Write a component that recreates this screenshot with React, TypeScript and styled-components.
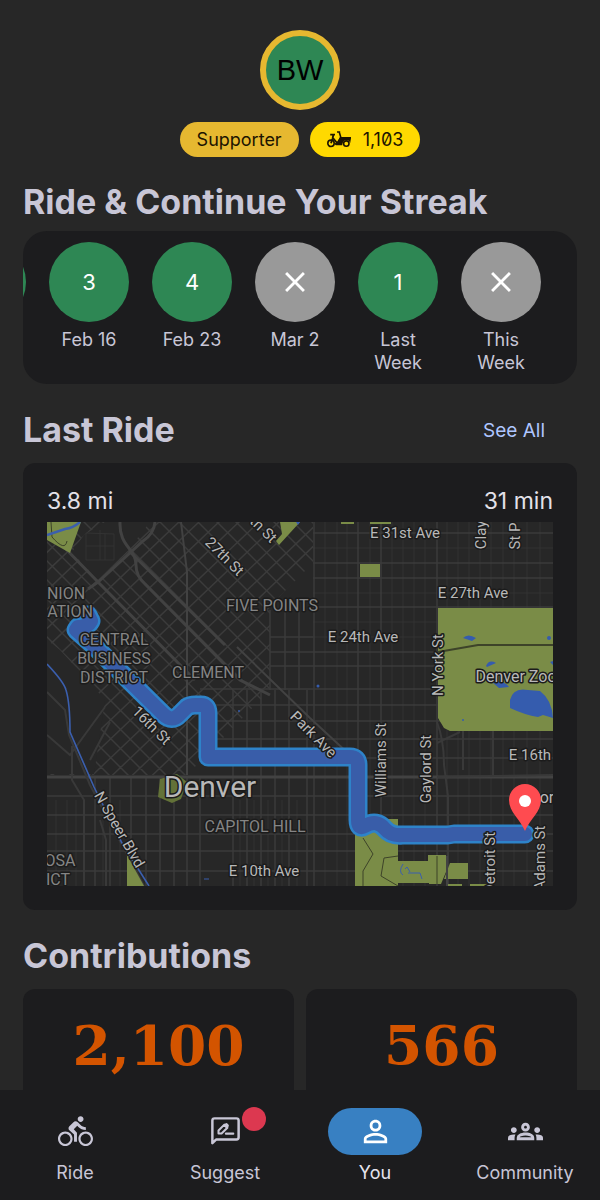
import React from "react";
import styled, { createGlobalStyle } from "styled-components";
import {
  MdClose,
  MdDirectionsBike,
  MdOutlineGroups,
  MdPersonOutline,
} from "react-icons/md";

const GlobalStyle = createGlobalStyle`
  * { box-sizing: border-box; }
  body {
    margin: 0;
    background: #272727;
    color: #c8c6d6;
    font-family: Inter, "Liberation Sans", sans-serif;
  }
  h2, p, ul, ol { margin: 0; padding: 0; }
  li { list-style: none; }
  button { font: inherit; border: 0; cursor: pointer; }
`;

const Shell = styled.div`
  display: flex;
  flex-direction: column;
  height: 100vh;
`;

const Main = styled.main`
  flex: 1;
  min-height: 0;
  overflow-y: auto;
  scrollbar-width: none;
  padding: 30px 23px 24px;
`;

const Profile = styled.header`
  display: flex;
  flex-direction: column;
  align-items: center;
  gap: 12px;
`;

const Avatar = styled.div`
  display: grid;
  place-items: center;
  width: 80px;
  height: 80px;
  border: 6px solid #e6b830;
  border-radius: 50%;
  background: #2e8754;
  color: #000;
  font: 29px "Liberation Sans", sans-serif;
`;

const Chips = styled.div`
  display: flex;
  gap: 11px;
`;

const Chip = styled.span<{ $color: string }>`
  display: flex;
  align-items: center;
  gap: 12px;
  height: 35px;
  padding: 0 17px;
  border-radius: 18px;
  background: ${(p) => p.$color};
  color: #1c1400;
  font-size: 18px;
  font-feature-settings: "zero";
`;

const SectionHead = styled.div<{ $top: number; $bottom: number }>`
  display: flex;
  align-items: center;
  justify-content: space-between;
  margin: ${(p) => p.$top}px 0 ${(p) => p.$bottom}px;
`;

const Title = styled.h2`
  font-size: 34px;
  line-height: 40px;
  font-weight: 700;
`;

const SeeAll = styled.a`
  padding: 0 32px;
  color: #afc6ff;
  font-size: 19px;
  text-decoration: none;
`;

const Streak = styled.ol`
  display: flex;
  justify-content: flex-end;
  gap: 23px;
  overflow: hidden;
  padding: 11px 36px 10px 0;
  border-radius: 24px;
  background: #1c1c1e;
`;

const Week = styled.li`
  flex: 0 0 80px;
  display: flex;
  flex-direction: column;
  align-items: center;
  gap: 6px;
  font-size: 18px;
  line-height: 23px;
  text-align: center;
`;

const WeekDot = styled.span<{ $missed: boolean }>`
  display: grid;
  place-items: center;
  width: 80px;
  height: 80px;
  border-radius: 50%;
  background: ${(p) => (p.$missed ? "#999" : "#2e8754")};
  color: #fff;
  font-size: 22px;
`;

const WeekLabel = styled.span`
  width: 68px;
  min-height: 46px;
`;

const RideCard = styled.section`
  padding: 24px;
  border-radius: 12px;
  background: #1c1c1e;
`;

const RideStats = styled.div`
  display: flex;
  justify-content: space-between;
  padding-bottom: 7px;
  color: #e3e1e9;
  font-size: 23px;
  line-height: 28px;
`;

const MapView = styled.svg`
  display: block;
  width: 100%;
  height: auto;
`;

const Totals = styled.div`
  display: grid;
  grid-template-columns: 1fr 1fr;
  gap: 12px;
`;

const Total = styled.div`
  padding: 25px 12px 64px;
  border-radius: 12px;
  background: #1c1c1e;
  color: #d35400;
  font: bold 55px/64px "DejaVu Serif", serif;
  text-align: center;
`;

const Nav = styled.nav`
  display: grid;
  grid-template-columns: repeat(4, 1fr);
  height: 110px;
  padding-top: 18px;
  background: #1c1c1e;
`;

const NavButton = styled.button<{ $active?: boolean }>`
  display: flex;
  flex-direction: column;
  align-items: center;
  gap: 6px;
  padding: 0;
  background: none;
  color: ${(p) => (p.$active ? "#e6e4ee" : "#c8c6d6")};
  font-size: 18px;
  line-height: 23px;
`;

const NavIcon = styled.span<{ $active?: boolean }>`
  position: relative;
  display: grid;
  place-items: center;
  width: 94px;
  height: 47px;
  border-radius: 24px;
  background: ${(p) => (p.$active ? "#3880c2" : "transparent")};
  color: ${(p) => (p.$active ? "#fff" : "inherit")};
`;

const Badge = styled.span`
  position: absolute;
  top: -1px;
  right: 6px;
  width: 24px;
  height: 24px;
  border-radius: 50%;
  background: #dc3850;
`;

function CargoBike() {
  return (
    <svg width="24" height="17" viewBox="0 0 24 17" fill="none" stroke="currentColor">
      <circle cx="4" cy="12.3" r="3.2" strokeWidth="1.6" />
      <circle cx="19.3" cy="12.6" r="2.7" strokeWidth="1.6" />
      <path d="M3.200 3.700H8M6.300 4L5.600 7.500L4 12.300M6 7L10.500 12.500" strokeWidth="1.8" />
      <path d="M10 1H13.200M12.300 1.200L13.800 6.300L10.500 12" strokeWidth="1.6" />
      <path
        d="M13 6H24.200L23.200 12Q22 8.800 19 9Q15.800 9.200 15.200 14.300H9Q7.600 14 8 12.300L10 11.200L12 8Z"
        fill="currentColor"
        stroke="none"
      />
    </svg>
  );
}

function SuggestIcon() {
  return (
    <svg width="35" height="35" viewBox="0 0 24 24" fill="none" stroke="currentColor" strokeWidth="1.7">
      <path d="M3 20V4.500Q3 3 4.500 3H19.500Q21 3 21 4.500V16Q21 17.500 19.500 17.500H5.500Z" strokeLinejoin="round" />
      <path d="M7.200 13.400V11.300L11.200 7.300L13.300 9.400L9.300 13.400Z" strokeWidth="1.400" strokeLinejoin="round" />
      <path d="M10.600 7.900L12.100 6.400Q12.700 6 13.300 6.500L14.100 7.300Q14.600 7.900 14.100 8.500L12.600 10Z" fill="currentColor" stroke="none" />
      <path d="M12.300 13.500H17.300" strokeWidth="1.500" strokeLinecap="round" />
    </svg>
  );
}

const horizontal = (y: number, from: number, to: number) => `M${from} ${y}H${to}`;
const vertical = (x: number, from: number, to: number) => `M${x} ${from}V${to}`;

const northStreets = [533, 563, 578, 607, 652, 666].map((y) => horizontal(y, 313, 553));
const southStreets = [689, 705, 721, 739, 758, 796, 815, 834, 851, 871].map((y) =>
  horizontal(y, y < 770 ? 200 : 47, 553)
);
const avenues = [314, 358, 381, 437].map((x) => vertical(x, 522, 886));
const southAvenues = [95, 110, 131, 146, 160, 174, 187, 200].map((x) => vertical(x, 777, 886));
const centralAvenues = [233, 247, 261, 275, 289, 307].map((x) => vertical(x, 690, 886));
const minorNorth = [548, 593, 622, 637].map((y) => horizontal(y, 313, 553));
const minorAvenues = [
  325, 337, 347, 370, 392, 403, 414, 425, 447, 458, 469, 480, 491, 503, 514, 527, 540,
].map((x) => vertical(x, 522, 886));
const minorSouth = [56, 67, 76, 84, 103, 120, 240, 254, 268, 282, 297].map((x) =>
  vertical(x, 800, 886)
);
const risingStreets = Array.from({ length: 29 }, (_, i) => `M40 ${540 + i * 19}L340 ${255 + i * 19}`);
const fallingStreets = Array.from({ length: 29 }, (_, i) => `M40 ${250 + i * 19}L340 ${550 + i * 19}`);

const ROUTE =
  "M88 615L91 621Q88 627 78 627L76 630L92 644L163 714Q172 723 180 714L187 707Q190 705 195 705H201Q208 705 208 713V757H350Q358 757 358 765V820Q358 830 365 826Q377 819 385 829Q391 836 402 835L448 835L454 834H525";

type Label = {
  text: string;
  x: number;
  y: number;
  size?: number;
  angle?: number;
  dim?: boolean;
};

const labels: Label[] = [
  { text: "NION", x: 66, y: 599, dim: true },
  { text: "ATION", x: 70, y: 617, dim: true },
  { text: "CENTRAL", x: 114, y: 645, dim: true },
  { text: "BUSINESS", x: 114, y: 664, dim: true },
  { text: "DISTRICT", x: 114, y: 683, dim: true },
  { text: "CLEMENT", x: 208, y: 678, dim: true },
  { text: "FIVE POINTS", x: 272, y: 611, dim: true },
  { text: "CAPITOL HILL", x: 255, y: 832, dim: true },
  { text: "OSA", x: 60, y: 866, dim: true },
  { text: "ICT", x: 58, y: 885, dim: true },
  { text: "27th St", x: 221, y: 560, angle: 45 },
  { text: "9th St", x: 257, y: 530, angle: 45 },
  { text: "16th St", x: 148, y: 729, angle: 45 },
  { text: "Park Ave", x: 310, y: 738, angle: 45 },
  { text: "N Speer Blvd", x: 115, y: 832, angle: 60 },
  { text: "E 31st Ave", x: 405, y: 538 },
  { text: "E 27th Ave", x: 473, y: 598 },
  { text: "E 24th Ave", x: 363, y: 642 },
  { text: "E 10th Ave", x: 264, y: 876 },
  { text: "E 16th", x: 530, y: 760 },
  { text: "Clay", x: 486, y: 535, angle: -90 },
  { text: "St P", x: 520, y: 536, angle: -90 },
  { text: "N York St", x: 443, y: 665, angle: -90 },
  { text: "Williams St", x: 386, y: 760, angle: -90 },
  { text: "Gaylord St", x: 431, y: 769, angle: -90 },
  { text: "Detroit St", x: 495, y: 863, angle: -90 },
  { text: "Adams St", x: 545, y: 858, angle: -90 },
  { text: "Denver Zoo", x: 516, y: 682, size: 16 },
  { text: "or", x: 547, y: 803, size: 16 },
  { text: "Denver", x: 210, y: 797, size: 30 },
];

function RideMap() {
  return (
    <MapView viewBox="47 522 506 364" role="img" aria-label="Route of the last ride through Denver">
      <defs>
        <clipPath id="downtown">
          <path d="M47 522H313V563L270 606V690L187 775H47Z" />
        </clipPath>
      </defs>
      <path fill="#272727" d="M47 522H553V886H47Z" />
      <g fill="none" stroke="#323232">
        <path d={[...minorNorth, ...minorAvenues, ...minorSouth].join("")} />
      </g>
      <g fill="none" stroke="#3b3b3b" strokeWidth="1.5">
        <path
          d={[...northStreets, ...southStreets, ...avenues, ...southAvenues, ...centralAvenues].join("")}
        />
        <path d="M270 610V690M285 610V690M299 610V690M270 637H313M270 652H313M270 666H313" />
        <g clipPath="url(#downtown)">
          <path d={[...risingStreets, ...fallingStreets].join("")} />
        </g>
      </g>
      <path fill="#272727" d="M84 535L105 522H150L128 550L98 580L72 552ZM47 640L60 650L105 700L94 774H47Z" />
      <g fill="none" stroke="#424242" strokeWidth="2">
        <path d="M47 777H553" strokeWidth="3" />
        <path d="M120 522C119 547 136 548 136 565Q136 576 145 584L240 680L270 695" strokeWidth="3" />
        <path d="M155 522Q154 534 143 541L98 582L88 589M129 551L225 645M62 545L98 582L195 680" strokeWidth="3" />
        <path d="M86 533V560H114V534ZM100 530V560M105 534V560M86 546H114" stroke="#333" strokeWidth="1" />
        <path d="M181 522L187 572V775" />
        <path d="M237 647L310 718L350 755" />
        <path d="M47 692L65 710L69 735L90 785L144 886M47 735L70 755L105 707M110 722L90 760M72 746V780L84 800V886M100 820L106 840V886" stroke="#393939" />
        <path d="M437 722Q444 740 444 765L448 796V886M463 731V770M493 731V775M437 743L460 732M437 777L553 775" stroke="#393939" />
      </g>
      <g fill="#7a8c47">
        <path d="M47 522H81L70 553L47 540Z" />
        <path d="M280 522H300L279 545L276 541L282 534Z" />
        <path d="M360 564H380V577H360ZM341 522H354V524H341ZM370 522H391V524H370Z" />
        <path d="M438 608H553V731H450L444 728L438 718Z" />
        <path d="M355 834L380 819H398V886H355Z" />
        <path d="M398 861H428V855H446V872L441 884H429V883H398Z" />
        <path d="M450 863H468V879H444ZM446 884H462V886H446ZM470 884H492V886H470Z" />
        <path d="M127 855L144 886H127Z" />
        <path d="M160 779L177 774L187 782L181 799L172 803L158 797Z" fill="#637238" />
      </g>
      <g fill="none" stroke="#3d4329">
        <path d="M438 652L478 645H553" strokeWidth="2" />
        <path d="M51 522L52 537Q65 552 67 541M363 838L373 854L363 871V886M398 856L384 858L381 876L398 886M437 856V884" />
        <path d="M447 856V886" stroke="#424242" strokeWidth="2" />
      </g>
      <g fill="#355cae">
        <path d="M463 638Q468 633 476 638L472 641ZM486 666Q489 659 496 663L487 667ZM492 682Q504 680 509 687L499 688ZM510 700Q513 687 528 690L540 691Q552 700 553 718L543 715L538 717Q525 715 510 708Z" />
        <circle cx="463" cy="720" r="1" />
        <circle cx="318" cy="686" r="1.500" />
        <circle cx="239" cy="711" r="1" />
        <circle cx="549" cy="638" r="2" />
        <path d="M550 662L553 661V665ZM296 522H300L298 525Z" />
      </g>
      <g fill="none" stroke="#3b5fae">
        <path d="M47 535L65 529Q73 528 80 522" strokeWidth="2.500" />
        <path d="M47 664Q64 682 66 690Q70 703 70 732L94 787L123 845L149 886" strokeWidth="1.600" />
        <path d="M403 864Q398 872 403 875M405 869L407 867L410 872M408 873H420L422 879M204 879H209" />
      </g>
      <g fill="none" strokeLinecap="round" strokeLinejoin="round">
        <path d={ROUTE} stroke="#2e83c9" strokeWidth="19" />
        <path d={ROUTE} stroke="#395da9" strokeWidth="14" />
      </g>
      <g
        fontFamily='Roboto, "Liberation Sans", sans-serif'
        textAnchor="middle"
        stroke="#1b1b1b"
        strokeWidth="3"
        strokeLinejoin="round"
        paintOrder="stroke"
      >
        {labels.map((l) => (
          <text
            key={l.text}
            x={l.x}
            y={l.y}
            fontSize={l.size ?? (l.dim ? 16 : 15)}
            fill={l.dim ? "#858585" : "#b8b8b8"}
            transform={l.angle ? `rotate(${l.angle} ${l.x} ${l.y})` : undefined}
          >
            {l.text}
          </text>
        ))}
      </g>
      <path d="M525 831C520 819 509 812 509 800A16 16 0 0 1 541 800C541 812 530 819 525 831Z" fill="#ff4b50" />
      <circle cx="525" cy="801" r="6" fill="#fff" />
    </MapView>
  );
}

const weeks = [
  { label: "", rides: 2 },
  { label: "Feb 16", rides: 3 },
  { label: "Feb 23", rides: 4 },
  { label: "Mar 2", rides: 0 },
  { label: "Last Week", rides: 1 },
  { label: "This Week", rides: 0 },
];

export default function App() {
  return (
    <>
      <GlobalStyle />
      <Shell>
        <Main>
          <Profile>
            <Avatar>BW</Avatar>
            <Chips>
              <Chip $color="#e6b830">Supporter</Chip>
              <Chip $color="#ffd900">
                <CargoBike />
                1,103
              </Chip>
            </Chips>
          </Profile>

          <SectionHead $top={25} $bottom={9}>
            <Title>Ride &amp; Continue Your Streak</Title>
          </SectionHead>
          <Streak>
            {weeks.map((week) => (
              <Week key={week.label}>
                <WeekDot $missed={week.rides === 0}>
                  {week.label && (week.rides || <MdClose size={34} />)}
                </WeekDot>
                <WeekLabel>{week.label}</WeekLabel>
              </Week>
            ))}
          </Streak>

          <SectionHead $top={26} $bottom={13}>
            <Title>Last Ride</Title>
            <SeeAll href="#rides">See All</SeeAll>
          </SectionHead>
          <RideCard>
            <RideStats>
              <span>3.8 mi</span>
              <span>31 min</span>
            </RideStats>
            <RideMap />
          </RideCard>

          <SectionHead $top={26} $bottom={13}>
            <Title>Contributions</Title>
          </SectionHead>
          <Totals>
            <Total>2,100</Total>
            <Total>566</Total>
          </Totals>
        </Main>

        <Nav>
          <NavButton type="button">
            <NavIcon>
              <MdDirectionsBike size={35} />
            </NavIcon>
            Ride
          </NavButton>
          <NavButton type="button">
            <NavIcon>
              <SuggestIcon />
              <Badge />
            </NavIcon>
            Suggest
          </NavButton>
          <NavButton type="button" $active>
            <NavIcon $active>
              <MdPersonOutline size={35} />
            </NavIcon>
            You
          </NavButton>
          <NavButton type="button">
            <NavIcon>
              <MdOutlineGroups size={35} />
            </NavIcon>
            Community
          </NavButton>
        </Nav>
      </Shell>
    </>
  );
}
